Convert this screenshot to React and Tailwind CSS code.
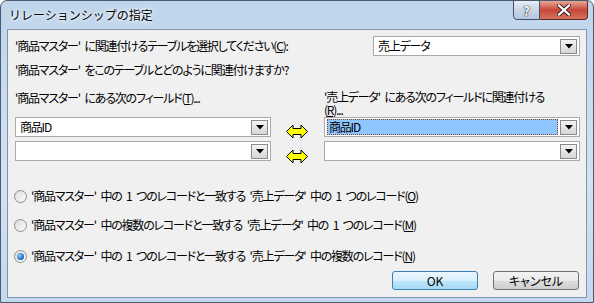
import React from 'react';

const font = "font-['MS_UI_Gothic','Noto_Sans_CJK_JP',sans-serif]";

function Combo({ value, selected, className = '' }) {
    return (
        <div className={`h-[20px] border border-[#a9a9a9] bg-white flex items-center p-[1px] ${className}`}>
            <div className="flex-1 h-full flex items-center pl-[1px]">
                {selected ? (
                    <span className="h-[16px] w-full flex items-center bg-[#90c6ff] border border-dotted border-[#8a4a1a] pl-[1px] leading-none">
                        {value}
                    </span>
                ) : (
                    <span className="pl-[2px] leading-none">{value}</span>
                )}
            </div>
            <div className="w-[17px] h-[15px] ml-[2px] mr-[1px] border border-[#8a8a8a] bg-gradient-to-b from-[#f4f4f4] to-[#d6d6d6] flex items-center justify-center">
                <svg width="8" height="5" viewBox="0 0 8 5"><path d="M0 0h8L4 4.5z" fill="#000" /></svg>
            </div>
        </div>
    );
}

function Arrow() {
    return (
        <svg width="22" height="15" viewBox="0 0 22 15">
            <polygon points="0.5,7.5 7,1 7,4.5 15,4.5 15,1 21.5,7.5 15,14 15,10.5 7,10.5 7,14" fill="#ffff00" stroke="#000" strokeWidth="1" />
        </svg>
    );
}

function Radio({ checked, children }) {
    return (
        <div className="h-[16px] flex items-center">
            <span className="ml-[6px] w-[13px] h-[13px] shrink-0 rounded-full border border-[#8f8f8f] bg-gradient-to-br from-[#dcdcdc] to-[#fbfbfb] flex items-center justify-center">
                {checked && <span className="w-[7px] h-[7px] rounded-full bg-[radial-gradient(circle_at_35%_35%,#8ed0ff,#1a64b4_70%,#0c3f7c)]" />}
            </span>
            <span className="ml-[4px] leading-none whitespace-nowrap">{children}</span>
        </div>
    );
}

export default function App() {
    return (
        <div className={`w-[594px] h-[303px] overflow-hidden rounded-t-[7px] border border-[#4a5a6e] bg-[linear-gradient(180deg,#bfd5ec,#d2e2f3_60%,#c4d8ee)] flex flex-col text-black ${font}`}>
            <div className="h-[28px] flex items-start shrink-0">
                <span className="mt-[6px] ml-[8px] text-[12px] leading-[15px] [text-shadow:0_0_6px_#fff,0_0_3px_#fff]">リレーションシップの指定</span>
                <div className="ml-auto mr-[5px] mt-[-1px] flex">
                    <div className="w-[27px] h-[20px] rounded-bl-[4px] border border-[#40506a] bg-gradient-to-b from-[#e6eef8] via-[#c9d6e6] to-[#b6c7dc] flex items-center justify-center text-white font-bold text-[13px] leading-none [text-shadow:0_0_1px_#233,0_0_1px_#233,0_0_1px_#233]">
                        ?
                    </div>
                    <div className="w-[48px] h-[20px] rounded-br-[4px] border border-l-0 border-[#5a2a24] bg-gradient-to-b from-[#e6a696] via-[#c7463a] to-[#d6725c] flex items-center justify-center">
                        <svg width="14" height="12" viewBox="0 0 14 12">
                            <path d="M2 1.5l10 9M12 1.5l-10 9" stroke="#3a2420" strokeWidth="4" strokeLinecap="square" />
                            <path d="M2 1.5l10 9M12 1.5l-10 9" stroke="#fff" strokeWidth="2.2" strokeLinecap="square" />
                        </svg>
                    </div>
                </div>
            </div>

            <div className="mx-[6px] h-[269px] border border-[#8195ad] bg-[#f0f0f0] flex flex-col text-[12px] tracking-[-1.2px] [word-spacing:3px] [font-feature-settings:'palt']">
                <div className="mt-[6px] h-[20px] flex items-center">
                    <span className="ml-[7px] leading-none">'商品マスター' に関連付けるテーブルを選択してください(<u>C</u>):</span>
                    <Combo value="売上データ" className="ml-auto mr-[6px] w-[207px]" />
                </div>

                <div className="mt-[7px] ml-[7px] h-[14px] leading-[14px]">'商品マスター' をこのテーブルとどのように関連付けますか?</div>

                <div className="mt-[13px] flex">
                    <div className="ml-[7px] w-[256px] flex flex-col">
                        <div className="h-[27px] pt-[1px] leading-[13px]">'商品マスター' にある次のフィールド(<u>T</u>)...</div>
                        <div className="flex flex-col gap-[4px]">
                            <Combo value="商品ID" />
                            <Combo value="" />
                        </div>
                    </div>
                    <div className="w-[53px] flex flex-col items-start pl-[15px] pt-[34px] gap-[10px]">
                        <Arrow />
                        <Arrow />
                    </div>
                    <div className="w-[256px] flex flex-col">
                        <div className="h-[27px] leading-[13px]">
                            '売上データ' にある次のフィールドに関連付ける
                            <br />(<u>R</u>)...
                        </div>
                        <div className="flex flex-col gap-[4px]">
                            <Combo value="商品ID" selected />
                            <Combo value="" />
                        </div>
                    </div>
                </div>

                <div className="mt-[24px] flex flex-col">
                    <Radio>'商品マスター' 中の 1 つのレコードと一致する '売上データ' 中の 1 つのレコード(<u>O</u>)</Radio>
                    <div className="h-[13px]" />
                    <Radio>'商品マスター' 中の複数のレコードと一致する '売上データ' 中の 1 つのレコード(<u>M</u>)</Radio>
                    <div className="h-[15px]" />
                    <Radio checked>'商品マスター' 中の 1 つのレコードと一致する '売上データ' 中の複数のレコード(<u>N</u>)</Radio>
                </div>

                <div className="mt-[7px] flex justify-end gap-[15px] mr-[7px] tracking-normal [word-spacing:0]">
                    <button className="w-[86px] h-[19px] rounded-[3px] border border-[#3c7fb1] bg-[linear-gradient(180deg,#eaf6fd,#d9f0fc_50%,#bee6fd_50%,#a7d9f5)] text-[12px] leading-none">
                        OK
                    </button>
                    <button className="w-[86px] h-[19px] rounded-[3px] border border-[#707070] bg-[linear-gradient(180deg,#f2f2f2,#ebebeb_50%,#dddddd_50%,#cfcfcf)] text-[12px] leading-none">
                        キャンセル
                    </button>
                </div>
            </div>
        </div>
    );
}
